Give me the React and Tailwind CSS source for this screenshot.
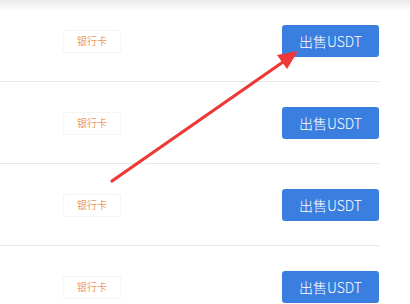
import React from "react";

const rows = [0, 1, 2, 3];

export default function App() {
  return (
    <div
      className="relative w-[410px] h-[304px] overflow-hidden bg-white"
      style={{ fontFamily: '"Noto Sans CJK SC", "Noto Sans", sans-serif' }}
    >
      <div className="w-[379px]">
        {rows.map((i) => (
          <div
            key={i}
            className="h-[82px] border-b border-[#e8e8e8] flex items-center justify-between pl-[63px] pt-[1px]"
          >
            <div className="h-[23px] px-[13px] flex items-center border border-[#f7f5f3] rounded-[2px] text-[10px] text-[#f09a58] leading-none">
              银行卡
            </div>
            <button className="w-[97px] h-[32px] rounded-[3px] bg-[#3a7ee0] text-white text-[14px] font-light leading-none flex items-center justify-center">
              出售USDT
            </button>
          </div>
        ))}
      </div>
      <div className="absolute top-0 left-0 w-full h-[12px] bg-gradient-to-b from-[#ececec] to-white/0" />
      <svg className="absolute top-0 left-0" width="410" height="304" viewBox="0 0 410 304">
        <line x1="112" y1="181" x2="283" y2="62" stroke="#ef3838" strokeWidth="3.2" strokeLinecap="round" />
        <polygon points="298,51 287,69 277,55" fill="#ef3838" />
      </svg>
    </div>
  );
}
